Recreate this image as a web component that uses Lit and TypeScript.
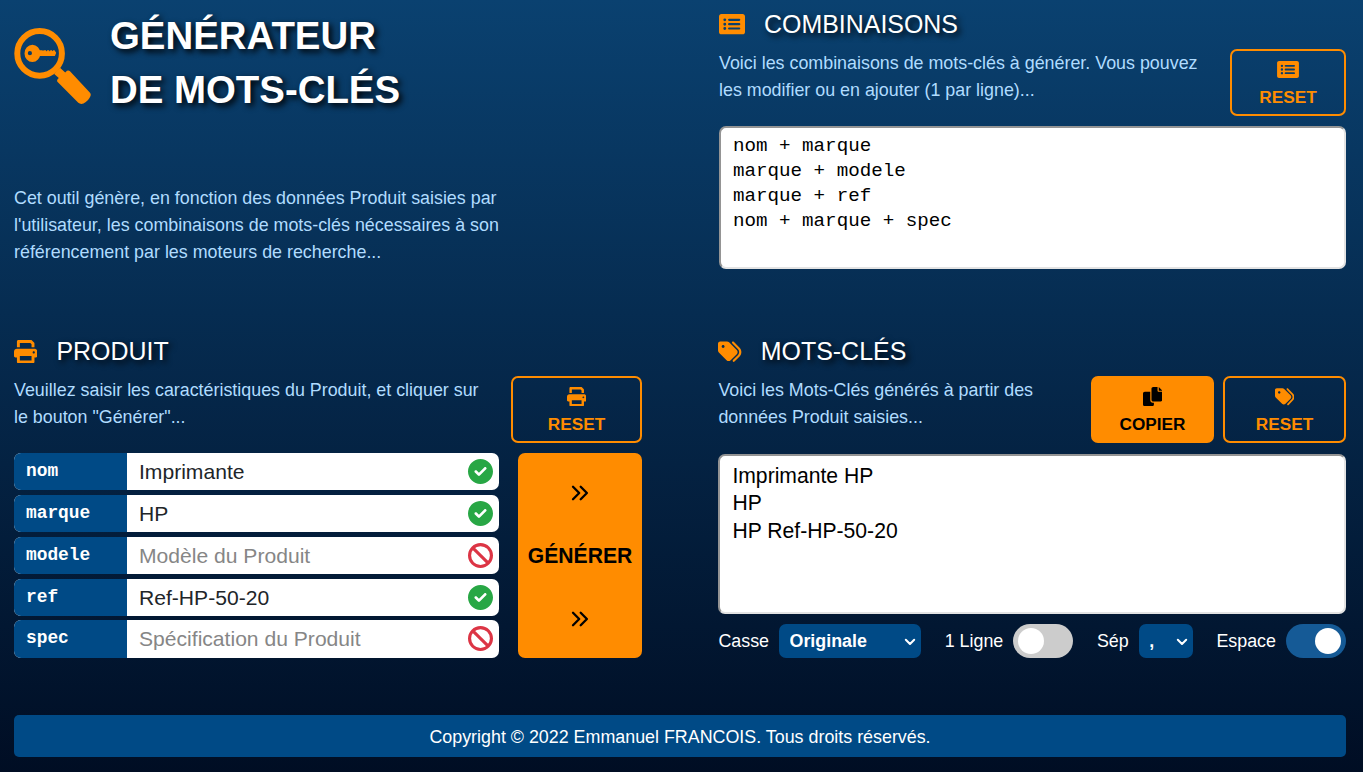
import { LitElement, html, css, svg, nothing } from "lit";
import { customElement, property, state } from "lit/decorators.js";

const ICONS: Record<string, { box: string; body: unknown }> = {
  list: {
    box: "0 32 576 448",
    body: svg`<path fill-rule="evenodd" d="M0 84C0 55 23 32 52 32H524C553 32 576 55 576 84V428C576 457 553 480 524 480H52C23 480 0 457 0 428ZM160 256a32 32 0 1 0-64 0a32 32 0 1 0 64 0ZM160 160a32 32 0 1 0-64 0a32 32 0 1 0 64 0ZM160 352a32 32 0 1 0-64 0a32 32 0 1 0 64 0ZM224 136a24 24 0 0 0 0 48H448a24 24 0 0 0 0-48ZM224 232a24 24 0 0 0 0 48H448a24 24 0 0 0 0-48ZM224 328a24 24 0 0 0 0 48H448a24 24 0 0 0 0-48Z"/>`,
  },
  print: {
    box: "0 0 512 512",
    body: svg`<path d="M448 192H64C28.65 192 0 220.7 0 256v96c0 17.67 14.33 32 32 32h32v96c0 17.67 14.33 32 32 32h320c17.67 0 32-14.33 32-32v-96h32c17.67 0 32-14.33 32-32V256C512 220.7 483.3 192 448 192zM384 448H128v-96h256V448zM432 296c-13.25 0-24-10.75-24-24c0-13.27 10.75-24 24-24s24 10.73 24 24C456 285.3 445.3 296 432 296zM128 64h229.5L384 90.51V160h64V77.25c0-8.484-3.375-16.62-9.375-22.63l-45.25-45.25C387.4 3.375 379.2 0 370.8 0H96C78.34 0 64 14.33 64 32v128h64V64z"/>`,
  },
  tags: {
    box: "0 0 512 512",
    body: svg`<path d="M472.8 168.4C525.1 221.4 525.1 306.6 472.8 359.6L360.8 472.9C351.5 482.3 336.3 482.4 326.9 473.1C317.4 463.8 317.4 448.6 326.7 439.1L438.6 325.9C472.5 291.6 472.5 236.4 438.6 202.1L310.9 72.87C301.5 63.44 301.6 48.25 311.1 38.93C320.5 29.61 335.7 29.7 345.1 39.13L472.8 168.4zM0 229.5V80C0 53.49 21.49 32 48 32H197.5C214.5 32 230.7 38.74 242.7 50.75L410.7 218.7C435.7 243.7 435.7 284.3 410.7 309.3L277.3 442.7C252.3 467.7 211.7 467.7 186.7 442.7L18.75 274.7C6.743 262.7 0 246.5 0 229.5zM112 112C94.33 112 80 126.3 80 144C80 161.7 94.33 176 112 176C129.7 176 144 161.7 144 144C144 126.3 129.7 112 112 112z"/>`,
  },
  copy: {
    box: "0 0 512 512",
    body: svg`<path d="M384 96L384 0h-112c-26.51 0-48 21.49-48 48v288c0 26.51 21.49 48 48 48H464c26.51 0 48-21.49 48-48V128h-95.1C398.4 128 384 113.6 384 96zM416 0v96h96L416 0zM192 352V128h-144c-26.51 0-48 21.49-48 48v288c0 26.51 21.49 48 48 48h192c26.51 0 48-21.49 48-48L288 416h-32C220.7 416 192 387.3 192 352z"/>`,
  },
  ok: {
    box: "0 0 512 512",
    body: svg`<path d="M0 256C0 114.6 114.6 0 256 0C397.4 0 512 114.6 512 256C512 397.4 397.4 512 256 512C114.6 512 0 397.4 0 256zM371.8 211.8C382.7 200.9 382.7 183.1 371.8 172.2C360.9 161.3 343.1 161.3 332.2 172.2L224 280.4L179.8 236.2C168.9 225.3 151.1 225.3 140.2 236.2C129.3 247.1 129.3 264.9 140.2 275.8L204.2 339.8C215.1 350.7 232.9 350.7 243.8 339.8L371.8 211.8z"/>`,
  },
  ban: {
    box: "0 0 512 512",
    body: svg`<g fill="none" stroke="currentColor" stroke-width="64"><circle cx="256" cy="256" r="224"/><path d="M98 98L414 414"/></g>`,
  },
  angles: {
    box: "0 0 18 16",
    body: svg`<path fill="none" stroke="currentColor" stroke-width="2.3" stroke-linecap="round" stroke-linejoin="round" d="M2 1.7L8.2 8L2 14.3M9.7 1.7L15.9 8L9.7 14.3"/>`,
  },
  chevron: {
    box: "0 0 12 8",
    body: svg`<path fill="none" stroke="currentColor" stroke-width="2" stroke-linecap="round" stroke-linejoin="round" d="M1.8 1.7L6 6L10.2 1.7"/>`,
  },
  logo: {
    box: "0 0 77 77",
    body: svg`<circle cx="25.6" cy="25.4" r="22.3" fill="none" stroke="currentColor" stroke-width="6"/>
      <path fill-rule="evenodd" d="M10.5 25.4a7.9 8.6 0 1 1 15.8 0a7.9 8.6 0 1 1-15.8 0ZM13.8 25.2a2.1 2.1 0 1 0 4.2 0a2.1 2.1 0 1 0-4.2 0Z"/>
      <path d="M24 22.3H28.5L29 22.9L29.6 22.3H31.9L32.6 23.4L33.3 22.3H35L35.7 23.4L36.4 22.3H37.9L38.6 23.3L39.3 22.3H40.5L42.2 24.8L40.9 28H24Z"/>
      <path d="M40.2 46L46 39.8L51.2 44.6L53 42.8Q54.5 42 56 43.3L76 64.8Q77.2 66.3 76.5 68Q74.5 73 69.5 75.5Q66.5 76.6 64.3 74.8L43.4 53.8Q42.7 52.5 43.6 51.2L44.8 50Z"/>`,
  },
};

@customElement("ui-icon")
class UiIcon extends LitElement {
  @property() name = "";
  static styles = css`
    :host { display: block; flex: none; }
    svg { display: block; width: 100%; height: 100%; fill: currentColor; }
  `;
  render() {
    const icon = ICONS[this.name];
    return icon ? html`<svg viewBox=${icon.box} aria-hidden="true">${icon.body}</svg>` : nothing;
  }
}

interface Field { key: string; value: string; hint: string }

@customElement("app-root")
class AppRoot extends LitElement {
  @state() private oneLine = false;
  @state() private space = true;
  @state() private fields: Field[] = [
    { key: "nom", value: "Imprimante", hint: "Nom du Produit" },
    { key: "marque", value: "HP", hint: "Marque du Produit" },
    { key: "modele", value: "", hint: "Modèle du Produit" },
    { key: "ref", value: "Ref-HP-50-20", hint: "Référence du Produit" },
    { key: "spec", value: "", hint: "Spécification du Produit" },
  ];

  static styles = css`
    * { box-sizing: border-box; }
    :host {
      display: grid;
      grid-template-columns: 628px 628px;
      grid-template-rows: 327px 378px 42px;
      column-gap: 76px;
      align-content: start;
      height: 772px;
      padding: 5px 17px 0 14px;
      overflow: hidden;
      background: linear-gradient(#0a4170, #000d23);
      color: #fff;
      font: 17.86px/27px "Liberation Sans", Arial, sans-serif;
    }
    .brand { display: flex; gap: 19px; height: 117px; padding-top: 4px; }
    .logo { width: 77px; height: 77px; margin-top: 19px; color: #ff8c00; }
    h1 { margin: 0; font-size: 38.4px; line-height: 54px; font-weight: 700; text-shadow: 3px 3px 6px #000; }
    .intro { margin: 63px 0 0; width: 500px; color: #b0dcff; }
    h2 {
      display: flex; align-items: center; gap: 19px; height: 39px; margin: 0 0 5px;
      font-size: 24.95px; font-weight: 400; text-shadow: 3px 3px 6px #000;
    }
    h2 ui-icon { color: #ff8c00; width: 23.4px; height: 23.4px; }
    h2 ui-icon.wide { width: 26px; height: 20.4px; }
    .head { display: flex; gap: 9px; height: 67px; }
    .head p { flex: 1; margin: 0; padding-top: 1px; color: #b0dcff; }
    .btn {
      display: flex; flex-direction: column; align-items: center; justify-content: space-between;
      width: 123px; height: 67px; padding: 9px 0 3px; border: 2px solid #ff8c00; border-radius: 7px;
      background: none; color: #ff8c00; font: 700 17.2px/27px "Liberation Sans", Arial, sans-serif;
    }
    .btn ui-icon { width: 19.4px; height: 19.4px; }
    .btn ui-icon.wide { width: 22px; height: 17px; margin-top: 1px; }
    .btn.full { background: #ff8c00; color: #000; }
    .btn.w116 { width: 116px; }
    .btn.w131 { width: 131px; }
    textarea {
      display: block; width: 100%; margin: 0; padding: 6px 12px; resize: none; outline: none; overflow: hidden;
      border: 2px solid; border-color: #949494 #e3e3e3 #e3e3e3 #949494; border-radius: 7px;
      background: #fff; color: #000;
    }
    .combos { height: 143px; margin-top: 10px; font: 19.2px/25px "Liberation Mono", monospace; }
    .words { height: 160px; margin-top: 11px; font: 21.15px/27.4px "Liberation Sans", Arial, sans-serif; }
    .top-right { padding-left: 1px; }
    .bottom-right { padding-left: 0.4px; }
    .form { display: grid; grid-template-columns: 485px 124px; column-gap: 19px; height: 205px; margin-top: 10px; }
    .fields { display: grid; grid-template-rows: repeat(5, 37.4px); row-gap: 4.47px; }
    .field { display: flex; border-radius: 7px; overflow: hidden; background: #fff; align-items: center; padding-right: 6px; }
    .field label {
      align-self: stretch; width: 113px; padding: 5px 12px 0; background: #004a86; color: #fff;
      font: 700 17.85px/27px "Liberation Mono", monospace;
    }
    .field input {
      flex: 1; min-width: 0; height: 37.4px; padding: 0.5px 12px 0; border: 0; outline: none; background: none; color: #212529;
      font: 21.1px "Liberation Sans", Arial, sans-serif;
    }
    .field input::placeholder { color: #868686; opacity: 1; }
    .field ui-icon { width: 25px; height: 25px; margin-bottom: 0.4px; }
    .valid { color: #28a745; }
    .invalid { color: #dc3545; }
    .generate {
      display: grid; grid-template-rows: 79px 47px 79px; place-items: center; padding: 0; border: 0; border-radius: 7px;
      background: #ff8c00; color: #000; font: 700 21.15px/30px "Liberation Sans", Arial, sans-serif;
    }
    .generate ui-icon { width: 18px; height: 16px; }
    .options { display: flex; align-items: center; justify-content: space-between; height: 34px; margin-top: 10px; }
    .option { display: flex; align-items: center; gap: 10px; }
    .select { display: grid; align-items: center; }
    .select > * { grid-area: 1 / 1; }
    .select select {
      appearance: none; width: 142px; height: 34px; padding: 0 10.5px; border: 0; border-radius: 7px;
      background: #004a86; color: #fff; font: 700 17.85px "Liberation Sans", Arial, sans-serif;
    }
    .select select.small { width: 54px; }
    .select ui-icon { justify-self: end; width: 12px; height: 8px; margin: 1px 5px 0 0; pointer-events: none; }
    .switch { display: flex; width: 60px; height: 34px; padding: 4px 5px; border: 0; border-radius: 17px; background: #ccc; }
    .switch.on { justify-content: flex-end; background: #155a96; }
    .knob { width: 26px; height: 26px; border-radius: 50%; background: #fff; }
    footer {
      grid-column: 1 / -1; margin-top: 5px; height: 42px; border-radius: 5px; background: #004a86;
      text-align: center; line-height: 44px;
    }
  `;

  private edit(i: number, e: Event) {
    const value = (e.target as HTMLInputElement).value;
    this.fields = this.fields.map((f, n) => (n === i ? { ...f, value } : f));
  }

  private resetFields() {
    this.fields = this.fields.map((f) => ({ ...f, value: "" }));
  }

  render() {
    return html`
      <header>
        <div class="brand">
          <ui-icon class="logo" name="logo"></ui-icon>
          <h1>GÉNÉRATEUR<br />DE MOTS-CLÉS</h1>
        </div>
        <p class="intro">Cet outil génère, en fonction des données Produit saisies par l'utilisateur, les combinaisons de mots-clés nécessaires à son référencement par les moteurs de recherche...</p>
      </header>

      <section class="top-right">
        <h2><ui-icon class="wide" name="list"></ui-icon>COMBINAISONS</h2>
        <div class="head">
          <p>Voici les combinaisons de mots-clés à générer. Vous pouvez<br />les modifier ou en ajouter (1 par ligne)...</p>
          <button class="btn w116"><ui-icon class="wide" name="list"></ui-icon>RESET</button>
        </div>
        <textarea class="combos" spellcheck="false" .value=${"nom + marque\nmarque + modele\nmarque + ref\nnom + marque + spec"}></textarea>
      </section>

      <section>
        <h2><ui-icon name="print"></ui-icon>PRODUIT</h2>
        <div class="head">
          <p>Veuillez saisir les caractéristiques du Produit, et cliquer sur<br />le bouton "Générer"...</p>
          <button class="btn w131" @click=${this.resetFields}><ui-icon name="print"></ui-icon>RESET</button>
        </div>
        <div class="form">
          <div class="fields">
            ${this.fields.map((f, i) => html`
              <div class="field">
                <label>${f.key}</label>
                <input .value=${f.value} placeholder=${f.hint} spellcheck="false" @input=${(e: Event) => this.edit(i, e)} />
                <ui-icon class=${f.value ? "valid" : "invalid"} name=${f.value ? "ok" : "ban"}></ui-icon>
              </div>`)}
          </div>
          <button class="generate">
            <ui-icon name="angles"></ui-icon><span>GÉNÉRER</span><ui-icon name="angles"></ui-icon>
          </button>
        </div>
      </section>

      <section class="bottom-right">
        <h2><ui-icon name="tags"></ui-icon>MOTS-CLÉS</h2>
        <div class="head">
          <p>Voici les Mots-Clés générés à partir des<br />données Produit saisies...</p>
          <button class="btn full"><ui-icon name="copy"></ui-icon>COPIER</button>
          <button class="btn"><ui-icon name="tags"></ui-icon>RESET</button>
        </div>
        <textarea class="words" spellcheck="false" .value=${"Imprimante HP\nHP\nHP Ref-HP-50-20"}></textarea>
        <div class="options">
          <div class="option">
            <span>Casse</span>
            <div class="select"><select><option>Originale</option></select><ui-icon name="chevron"></ui-icon></div>
          </div>
          <div class="option">
            <span>1 Ligne</span>
            <button class="switch ${this.oneLine ? "on" : ""}" @click=${() => (this.oneLine = !this.oneLine)}><span class="knob"></span></button>
          </div>
          <div class="option">
            <span>Sép</span>
            <div class="select"><select class="small"><option>,</option></select><ui-icon name="chevron"></ui-icon></div>
          </div>
          <div class="option">
            <span>Espace</span>
            <button class="switch ${this.space ? "on" : ""}" @click=${() => (this.space = !this.space)}><span class="knob"></span></button>
          </div>
        </div>
      </section>

      <footer>Copyright © 2022 Emmanuel FRANCOIS. Tous droits réservés.</footer>
    `;
  }
}
